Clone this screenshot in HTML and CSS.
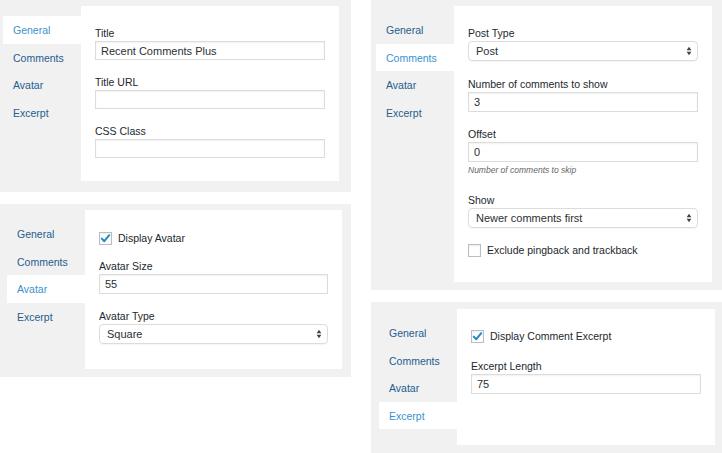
FILE: index.html
```html
<!DOCTYPE html>
<html lang="en">
<head>
<meta charset="utf-8">
<title>Recent Comments Plus widget settings</title>
<link rel="stylesheet" href="styles.css">
</head>
<body>
<main class="board">
  <div class="col">
    <section class="panel p1">
      <nav class="tabs">
        <a class="tab active">General</a>
        <a class="tab">Comments</a>
        <a class="tab">Avatar</a>
        <a class="tab">Excerpt</a>
      </nav>
      <div class="pane">
        <div class="field">
          <label class="label">Title</label>
          <input class="input" type="text" value="Recent Comments Plus">
        </div>
        <div class="field">
          <label class="label">Title URL</label>
          <input class="input" type="text" value="">
        </div>
        <div class="field">
          <label class="label">CSS Class</label>
          <input class="input" type="text" value="">
        </div>
      </div>
    </section>

    <section class="panel p3">
      <nav class="tabs">
        <a class="tab">General</a>
        <a class="tab">Comments</a>
        <a class="tab active">Avatar</a>
        <a class="tab">Excerpt</a>
      </nav>
      <div class="pane">
        <div class="check-row">
          <span class="checkbox"><svg width="13" height="13" viewBox="0 0 13 13"><path d="M2.8 6.6 L5.3 9.2 L10.2 3.2" fill="none" stroke="#1e8cbe" stroke-width="2" stroke-linecap="round" stroke-linejoin="round"/></svg></span>
          <span class="check-label">Display Avatar</span>
        </div>
        <div class="field">
          <label class="label">Avatar Size</label>
          <input class="input" type="text" value="55">
        </div>
        <div class="field">
          <label class="label">Avatar Type</label>
          <div class="select"><span>Square</span><svg class="arrows" width="6" height="10" viewBox="0 0 6 10"><path d="M0.6 4.2 L3 0.8 L5.4 4.2 Z M0.6 5.8 L3 9.2 L5.4 5.8 Z" fill="#444"/></svg></div>
        </div>
      </div>
    </section>
  </div>

  <div class="col">
    <section class="panel p2">
      <nav class="tabs">
        <a class="tab">General</a>
        <a class="tab active">Comments</a>
        <a class="tab">Avatar</a>
        <a class="tab">Excerpt</a>
      </nav>
      <div class="pane">
        <div class="field">
          <label class="label">Post Type</label>
          <div class="select"><span>Post</span><svg class="arrows" width="6" height="10" viewBox="0 0 6 10"><path d="M0.6 4.2 L3 0.8 L5.4 4.2 Z M0.6 5.8 L3 9.2 L5.4 5.8 Z" fill="#444"/></svg></div>
        </div>
        <div class="field loose">
          <label class="label">Number of comments to show</label>
          <input class="input" type="text" value="3">
        </div>
        <div class="field">
          <label class="label">Offset</label>
          <input class="input" type="text" value="0">
          <p class="hint">Number of comments to skip</p>
        </div>
        <div class="field loose">
          <label class="label">Show</label>
          <div class="select"><span>Newer comments first</span><svg class="arrows" width="6" height="10" viewBox="0 0 6 10"><path d="M0.6 4.2 L3 0.8 L5.4 4.2 Z M0.6 5.8 L3 9.2 L5.4 5.8 Z" fill="#444"/></svg></div>
        </div>
        <div class="check-row after-field">
          <span class="checkbox"></span>
          <span class="check-label">Exclude pingback and trackback</span>
        </div>
      </div>
    </section>

    <section class="panel p4">
      <nav class="tabs">
        <a class="tab">General</a>
        <a class="tab">Comments</a>
        <a class="tab">Avatar</a>
        <a class="tab active">Excerpt</a>
      </nav>
      <div class="pane">
        <div class="check-row">
          <span class="checkbox"><svg width="13" height="13" viewBox="0 0 13 13"><path d="M2.8 6.6 L5.3 9.2 L10.2 3.2" fill="none" stroke="#1e8cbe" stroke-width="2" stroke-linecap="round" stroke-linejoin="round"/></svg></span>
          <span class="check-label">Display Comment Excerpt</span>
        </div>
        <div class="field">
          <label class="label">Excerpt Length</label>
          <input class="input" type="text" value="75">
        </div>
      </div>
    </section>
  </div>
</main>
</body>
</html>
```

FILE: styles.css
```css
body {
  margin: 0;
  background: #fff;
  font-family: "Liberation Sans", Arial, sans-serif;
  font-size: 10.5px;
  color: #32373c;
}

.board {
  display: grid;
  grid-template-columns: 351px 351px;
  column-gap: 20px;
  align-items: start;
}

.col {
  display: flex;
  flex-direction: column;
  gap: 12px;
}

.panel {
  display: flex;
  align-items: stretch;
  background: #f1f1f1;
}

.tabs {
  width: 78px;
  flex: none;
  display: flex;
  flex-direction: column;
  padding: 10px 0 16px;
}

.tab {
  display: block;
  flex: none;
  height: 27.5px;
  line-height: 28px;
  padding-left: 10px;
  color: #245d8f;
  text-decoration: none;
}

.tab.active {
  background: #fff;
  color: #3a92cf;
}

.pane {
  flex: 1;
  min-width: 0;
  background: #fff;
  padding: 19px 14px 24px;
}

.field + .field {
  margin-top: 14px;
}

.field.loose {
  margin-top: 15px;
}

.label {
  display: block;
  padding-top: 1px;
  line-height: 15px;
  color: #23282d;
}

.input {
  display: block;
  box-sizing: border-box;
  width: 100%;
  height: 20px;
  margin: 0;
  padding: 0 5px;
  border: 1px solid #dcdcdc;
  border-radius: 0;
  box-shadow: inset 0 1px 2px rgba(0, 0, 0, 0.06);
  background: #fff;
  font-family: inherit;
  font-size: 11px;
  color: #2b2f33;
  outline: none;
}

.select {
  display: flex;
  align-items: center;
  justify-content: space-between;
  box-sizing: border-box;
  height: 20px;
  padding: 0 5px 0 7px;
  border: 1px solid #dcdcdc;
  border-radius: 4px;
  box-shadow: 0 1px 1px rgba(0, 0, 0, 0.04);
  font-size: 11px;
  color: #2b2f33;
}

.arrows {
  display: block;
  flex: none;
}

.hint {
  margin: 2px 0 0;
  line-height: 13px;
  font-size: 8.5px;
  font-style: italic;
  color: #666;
}

.check-row {
  display: flex;
  align-items: center;
  gap: 6px;
  height: 16px;
}

.check-row.after-field {
  margin-top: 14px;
}

.checkbox {
  box-sizing: border-box;
  width: 13px;
  height: 13px;
  flex: none;
  border: 1px solid #b9bdc1;
  background: #fff;
  box-shadow: inset 0 1px 2px rgba(0, 0, 0, 0.08);
  display: flex;
  align-items: center;
  justify-content: center;
}

.checkbox svg {
  display: block;
  margin: -1px;
}

.check-label {
  color: #23282d;
}

/* per-panel spacing */
.p1 {
  padding: 6px 12px 11px 3px;
}

.p1 .input {
  height: 19px;
}

.p1 .pane {
  padding-bottom: 23px;
}

.p2 {
  padding: 6px 10px 8px 5px;
}

.p3 {
  padding: 6px 9px 8px 7px;
}

.p3 .pane {
  padding-top: 20px;
  padding-bottom: 25px;
}

.p3 .check-row + .field {
  margin-top: 12px;
}

.p4 {
  padding: 7px 7px 8px 8px;
}

.p4 .pane {
  padding-bottom: 0;
}

.p4 .check-row + .field {
  margin-top: 14px;
}
```
